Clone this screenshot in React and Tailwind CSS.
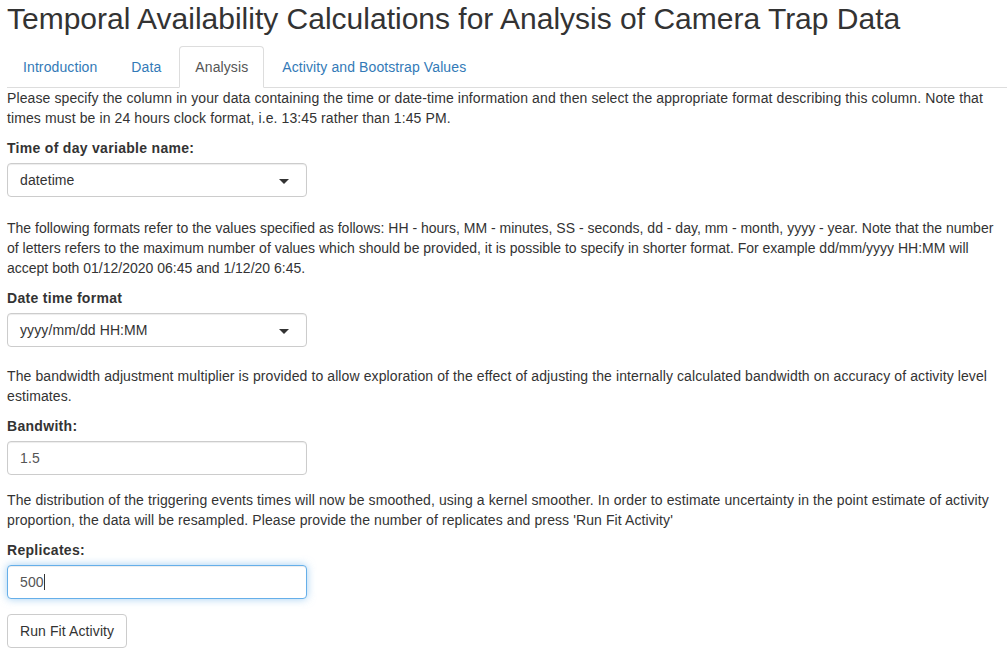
import React from "react";

const tabs = ["Introduction", "Data", "Analysis", "Activity and Bootstrap Values"];

function SelectBox({ value }) {
  return (
    <div className="relative w-[300px] h-[34px] flex items-center px-3 border border-[#ccc] rounded bg-white text-[#333] shadow-[inset_0_1px_1px_rgba(0,0,0,0.075)]">
      <span>{value}</span>
      <span className="absolute right-[17px] top-[15px] w-0 h-0 border-t-[5px] border-t-[#333] border-x-[5px] border-x-transparent" />
    </div>
  );
}

function TextBox({ value, focused }) {
  return (
    <div
      className={
        "w-[300px] h-[34px] flex items-center px-3 border rounded bg-white text-[#555] " +
        (focused
          ? "border-[#66afe9] shadow-[inset_0_1px_1px_rgba(0,0,0,0.075),0_0_8px_rgba(102,175,233,0.6)]"
          : "border-[#ccc] shadow-[inset_0_1px_1px_rgba(0,0,0,0.075)]")
      }
    >
      <span>{value}</span>
      {focused && <span className="inline-block w-px h-[16px] bg-[#333]" />}
    </div>
  );
}

function Label({ children }) {
  return <label className="block font-bold tracking-[0.3px] mb-[5px] leading-5">{children}</label>;
}

export default function App() {
  return (
    <div
      className="h-screen overflow-hidden bg-white pl-[7px] text-[14px] leading-5 tracking-[0.1px] text-[#333]"
      style={{ fontFamily: '"Liberation Sans", Arial, sans-serif' }}
    >
      <h2 className="text-[30px] leading-[33px] font-medium tracking-normal pt-[2px] mb-[11px]">
        Temporal Availability Calculations for Analysis of Camera Trap Data
      </h2>

      <ul className="flex border-b border-[#ddd]">
        {tabs.map((t) => {
          const active = t === "Analysis";
          return (
            <li key={t} className="-mb-px mr-[2px]">
              <a
                className={
                  "block px-[15px] py-[10px] leading-5 border rounded-t " +
                  (active
                    ? "bg-white border-[#ddd] border-b-transparent text-[#555]"
                    : "border-transparent text-[#337ab7]")
                }
              >
                {t}
              </a>
            </li>
          );
        })}
      </ul>

      <p className="mb-[10px]">
        Please specify the column in your data containing the time or date-time information and then select the
        appropriate format describing this column. Note that times must be in 24 hours clock format, i.e. 13:45 rather
        than 1:45 PM.
      </p>

      <div className="mb-[21px]">
        <Label>Time of day variable name:</Label>
        <SelectBox value="datetime" />
      </div>

      <p className="mb-[10px] tracking-normal">
        The following formats refer to the values specified as follows: HH - hours, MM - minutes, SS - seconds, dd -
        day, mm - month, yyyy - year. Note that the number of letters refers to the maximum number of values which
        should be provided, it is possible to specify in shorter format. For example dd/mm/yyyy HH:MM will accept both
        01/12/2020 06:45 and 1/12/20 6:45.
      </p>

      <div className="mb-[19px]">
        <Label>Date time format</Label>
        <SelectBox value="yyyy/mm/dd HH:MM" />
      </div>

      <p className="mb-[10px]">
        The bandwidth adjustment multiplier is provided to allow exploration of the effect of adjusting the internally
        calculated bandwidth on accuracy of activity level estimates.
      </p>

      <div className="mb-[15px]">
        <Label>Bandwith:</Label>
        <TextBox value="1.5" />
      </div>

      <p className="mb-[10px]">
        The distribution of the triggering events times will now be smoothed, using a kernel smoother. In order to
        estimate uncertainty in the point estimate of activity proportion, the data will be resampled. Please provide
        the number of replicates and press 'Run Fit Activity'
      </p>

      <div className="mb-[15px]">
        <Label>Replicates:</Label>
        <TextBox value="500" focused />
      </div>

      <button className="h-[34px] px-3 border border-[#ccc] rounded bg-white text-[#333]">Run Fit Activity</button>
    </div>
  );
}
